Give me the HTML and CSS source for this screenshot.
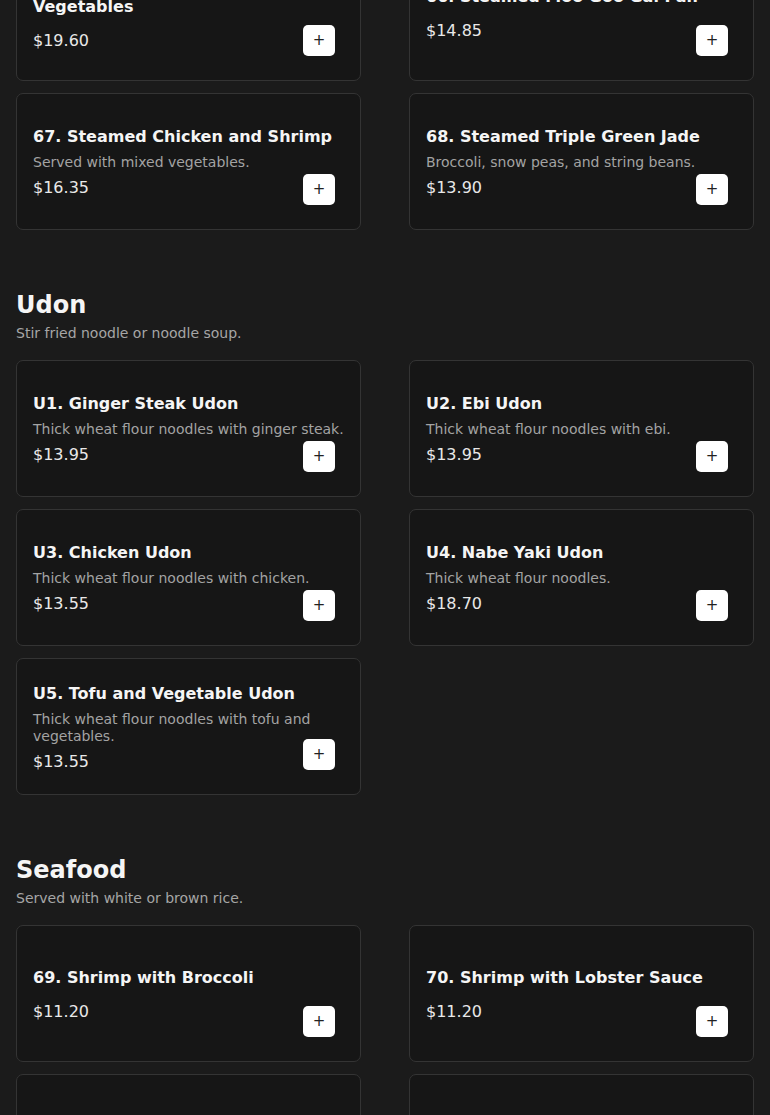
FILE: index.html
```html
<!DOCTYPE html>
<html lang="en">
<head>
  <meta charset="UTF-8" />
  <meta name="viewport" content="width=device-width, initial-scale=1" />
  <title>Menu</title>
  <link rel="stylesheet" href="styles.css">
</head>
<body>
  <main class="menu">

    <!-- tail of the section above (page is scrolled) -->
    <section class="section">
      <div class="grid">
        <div class="card">
          <h3 class="item-name">65. Steamed Shrimp with Mixed Vegetables</h3>
          <div class="item-price">$19.60</div>
          <button class="add-btn" aria-label="Add">+</button>
        </div>
        <div class="card">
          <h3 class="item-name">66. Steamed Moo Goo Gai Pan</h3>
          <div class="item-price">$14.85</div>
          <button class="add-btn" aria-label="Add">+</button>
        </div>
        <div class="card">
          <h3 class="item-name">67. Steamed Chicken and Shrimp</h3>
          <p class="item-desc">Served with mixed vegetables.</p>
          <div class="item-price">$16.35</div>
          <button class="add-btn" aria-label="Add">+</button>
        </div>
        <div class="card">
          <h3 class="item-name">68. Steamed Triple Green Jade</h3>
          <p class="item-desc">Broccoli, snow peas, and string beans.</p>
          <div class="item-price">$13.90</div>
          <button class="add-btn" aria-label="Add">+</button>
        </div>
      </div>
    </section>

    <section class="section">
      <h2 class="section-title">Udon</h2>
      <p class="section-desc">Stir fried noodle or noodle soup.</p>
      <div class="grid">
        <div class="card">
          <h3 class="item-name">U1. Ginger Steak Udon</h3>
          <p class="item-desc">Thick wheat flour noodles with ginger steak.</p>
          <div class="item-price">$13.95</div>
          <button class="add-btn" aria-label="Add">+</button>
        </div>
        <div class="card">
          <h3 class="item-name">U2. Ebi Udon</h3>
          <p class="item-desc">Thick wheat flour noodles with ebi.</p>
          <div class="item-price">$13.95</div>
          <button class="add-btn" aria-label="Add">+</button>
        </div>
        <div class="card">
          <h3 class="item-name">U3. Chicken Udon</h3>
          <p class="item-desc">Thick wheat flour noodles with chicken.</p>
          <div class="item-price">$13.55</div>
          <button class="add-btn" aria-label="Add">+</button>
        </div>
        <div class="card">
          <h3 class="item-name">U4. Nabe Yaki Udon</h3>
          <p class="item-desc">Thick wheat flour noodles.</p>
          <div class="item-price">$18.70</div>
          <button class="add-btn" aria-label="Add">+</button>
        </div>
        <div class="card">
          <h3 class="item-name">U5. Tofu and Vegetable Udon</h3>
          <p class="item-desc">Thick wheat flour noodles with tofu and vegetables.</p>
          <div class="item-price">$13.55</div>
          <button class="add-btn" aria-label="Add">+</button>
        </div>
      </div>
    </section>

    <section class="section">
      <h2 class="section-title">Seafood</h2>
      <p class="section-desc">Served with white or brown rice.</p>
      <div class="grid">
        <div class="card">
          <h3 class="item-name">69. Shrimp with Broccoli</h3>
          <div class="item-price">$11.20</div>
          <button class="add-btn" aria-label="Add">+</button>
        </div>
        <div class="card">
          <h3 class="item-name">70. Shrimp with Lobster Sauce</h3>
          <div class="item-price">$11.20</div>
          <button class="add-btn" aria-label="Add">+</button>
        </div>
        <div class="card">
          <h3 class="item-name">71. Shrimp with Garlic Sauce</h3>
          <div class="item-price">$11.20</div>
          <button class="add-btn" aria-label="Add">+</button>
        </div>
        <div class="card">
          <h3 class="item-name">72. Kung Pao Shrimp</h3>
          <div class="item-price">$11.20</div>
          <button class="add-btn" aria-label="Add">+</button>
        </div>
      </div>
    </section>

  </main>
</body>
</html>
```

FILE: styles.css
```css
body {
  margin: 0;
  padding: 0 16px;
  background-color: #1b1b1b;
  color: #f2f2f2;
  font-family: "DejaVu Sans", sans-serif;
}

.menu { margin-top: -56px; }

.section + .section { margin-top: 56px; }

.section-title {
  margin: 0;
  padding-top: 1px;
  font-size: 24px;
  line-height: 36px;
  font-weight: bold;
  color: #f5f5f5;
}
.section-desc {
  margin: 0 0 17px;
  font-size: 14px;
  line-height: 20px;
  color: #a6a6a6;
}

.grid {
  display: grid;
  grid-template-columns: 1fr 1fr;
  column-gap: 48px;
  row-gap: 12px;
}

.card {
  position: relative;
  box-sizing: border-box;
  height: 137px;
  padding: 2px 16px 0;
  display: flex;
  flex-direction: column;
  justify-content: center;
  background-color: #161616;
  border: 1px solid #343434;
  border-radius: 7px;
}

.item-name {
  margin: 0 0 7px;
  font-size: 16px;
  line-height: 20px;
  font-weight: bold;
  color: #f5f5f5;
}
.item-desc {
  margin: 0;
  font-size: 14px;
  line-height: 17px;
  color: #a3a3a3;
}
.item-price {
  margin-top: 7px;
  font-size: 16px;
  line-height: 20px;
  color: #e8e8e8;
}

.add-btn {
  position: absolute;
  right: 25px;
  bottom: 24px;
  width: 32px;
  height: 31px;
  padding: 0;
  border: none;
  border-radius: 5px;
  background-color: #fff;
  color: #222;
  font-family: "DejaVu Sans", sans-serif;
  font-size: 15px;
  line-height: 31px;
  cursor: pointer;
}
```
